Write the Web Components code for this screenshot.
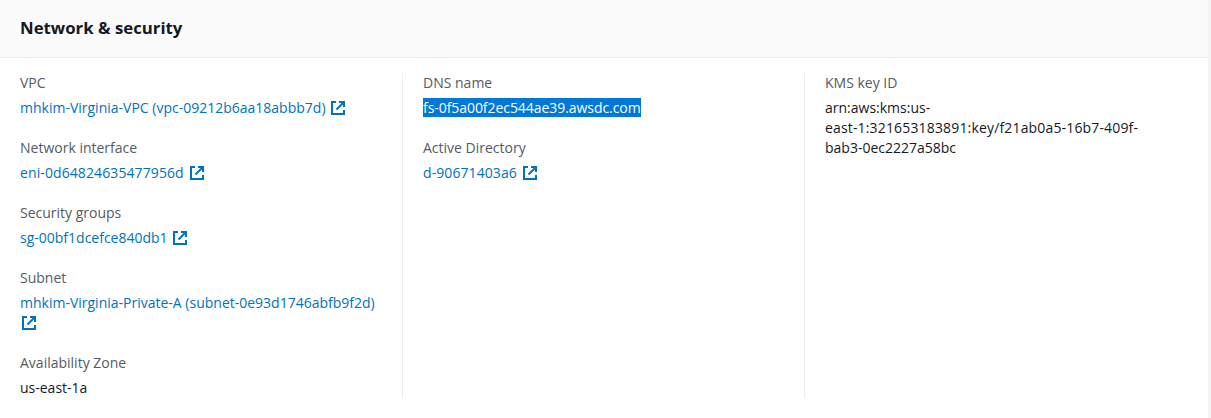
<!DOCTYPE html>
<html>
<head>
<meta charset="utf-8">
<title>Network &amp; security</title>
<style>
  html, body { margin: 0; height: 100%; background: #f2f3f3; }
  body { font: 14px/20px "Open Sans", "Noto Sans", sans-serif; color: #16191f; overflow: hidden; }
</style>
</head>
<body>
<template id="ext-link-tpl">
  <style>
    :host { display: block; }
    a { color: #0073bb; text-decoration: none; }
    svg { width: 16px; height: 16px; vertical-align: -3px; margin-left: 1px; }
    path { fill: none; stroke: #0073bb; stroke-width: 2; }
    .edge { shape-rendering: crispEdges; }
  </style>
  <a href="#"><slot></slot> <svg viewBox="0 0 16 16" aria-hidden="true"><path class="edge" d="M14 7V2H8.5"/><path d="M14 2 6.5 9.5"/><path class="edge" d="M5.5 2H2v12h12V9.5"/></svg></a>
</template>

<script>
class ExtLink extends HTMLElement {
  constructor() {
    super()
    this.attachShadow({ mode: 'open' })
    this.shadowRoot.append(document.getElementById('ext-link-tpl').content.cloneNode(true))
  }
}
class KeyValue extends HTMLElement {
  constructor() {
    super()
    this.attachShadow({ mode: 'open' })
  }
  connectedCallback() {
    this.shadowRoot.innerHTML = /*html*/ `
      <style>
        :host { display: block; margin-bottom: 20px; }
        :host(:last-child) { margin-bottom: 0; }
        .label { color: #545b64; margin-bottom: 5px; }
      </style>
      <div class="label">${this.getAttribute('label')}</div>
      <div class="value"><slot></slot></div>
    `
  }
}
class KvColumn extends HTMLElement {
  constructor() {
    super()
    this.attachShadow({ mode: 'open' })
    this.shadowRoot.innerHTML = /*html*/ `
      <style>
        :host { display: block; padding: 0 20px; border-left: 1px solid #eaeded; min-width: 0; }
        :host(:first-child) { border-left: 0; }
      </style>
      <slot></slot>
    `
  }
}
class InfoPanel extends HTMLElement {
  constructor() {
    super()
    this.attachShadow({ mode: 'open' })
  }
  connectedCallback() {
    this.shadowRoot.innerHTML = /*html*/ `
      <style>
        :host { display: block; width: 1208px; height: 418px; background: #fff; }
        header { box-sizing: border-box; height: 58px; padding: 16px 20px; background: #fafafa; border-bottom: 1px solid #eaeded; }
        h2 { margin: 0; font-size: 16.8px; line-height: 24px; font-weight: 700; color: #16191f; }
        .body { display: grid; grid-template-columns: 402px 402px 1fr; padding-top: 15px; }
      </style>
      <header><h2>${this.getAttribute('heading')}</h2></header>
      <div class="body"><slot></slot></div>
    `
  }
}
class SelectedText extends HTMLElement {
  constructor() {
    super()
    this.attachShadow({ mode: 'open' })
    this.shadowRoot.innerHTML = /*html*/ `
      <style>
        :host { display: inline; background: #0078d7; color: #fff; letter-spacing: -0.06px; }
      </style>
      <slot></slot>
    `
  }
}
customElements.define('ext-link', ExtLink)
customElements.define('key-value', KeyValue)
customElements.define('kv-column', KvColumn)
customElements.define('info-panel', InfoPanel)
customElements.define('selected-text', SelectedText)
</script>

<info-panel heading="Network &amp; security">
  <kv-column>
    <key-value label="VPC"><ext-link>mhkim-Virginia-VPC (vpc-09212b6aa18abbb7d)</ext-link></key-value>
    <key-value label="Network interface"><ext-link style="letter-spacing: .1px">eni-0d64824635477956d</ext-link></key-value>
    <key-value label="Security groups"><ext-link>sg-00bf1dcefce840db1</ext-link></key-value>
    <key-value label="Subnet"><ext-link>mhkim-Virginia-Private-A (subnet-0e93d1746abfb9f2d)</ext-link></key-value>
    <key-value label="Availability Zone">us-east-1a</key-value>
  </kv-column>
  <kv-column>
    <key-value label="DNS name"><selected-text>fs-0f5a00f2ec544ae39.awsdc.com</selected-text></key-value>
    <key-value label="Active Directory"><ext-link style="letter-spacing: .08px">d-90671403a6</ext-link></key-value>
  </kv-column>
  <kv-column>
    <key-value label="KMS key ID">arn:aws:kms:us-<br><span style="letter-spacing: .16px">east-1:321653183891:key/f21ab0a5-16b7-409f-</span><br>bab3-0ec2227a58bc</key-value>
  </kv-column>
</info-panel>
</body>
</html>
